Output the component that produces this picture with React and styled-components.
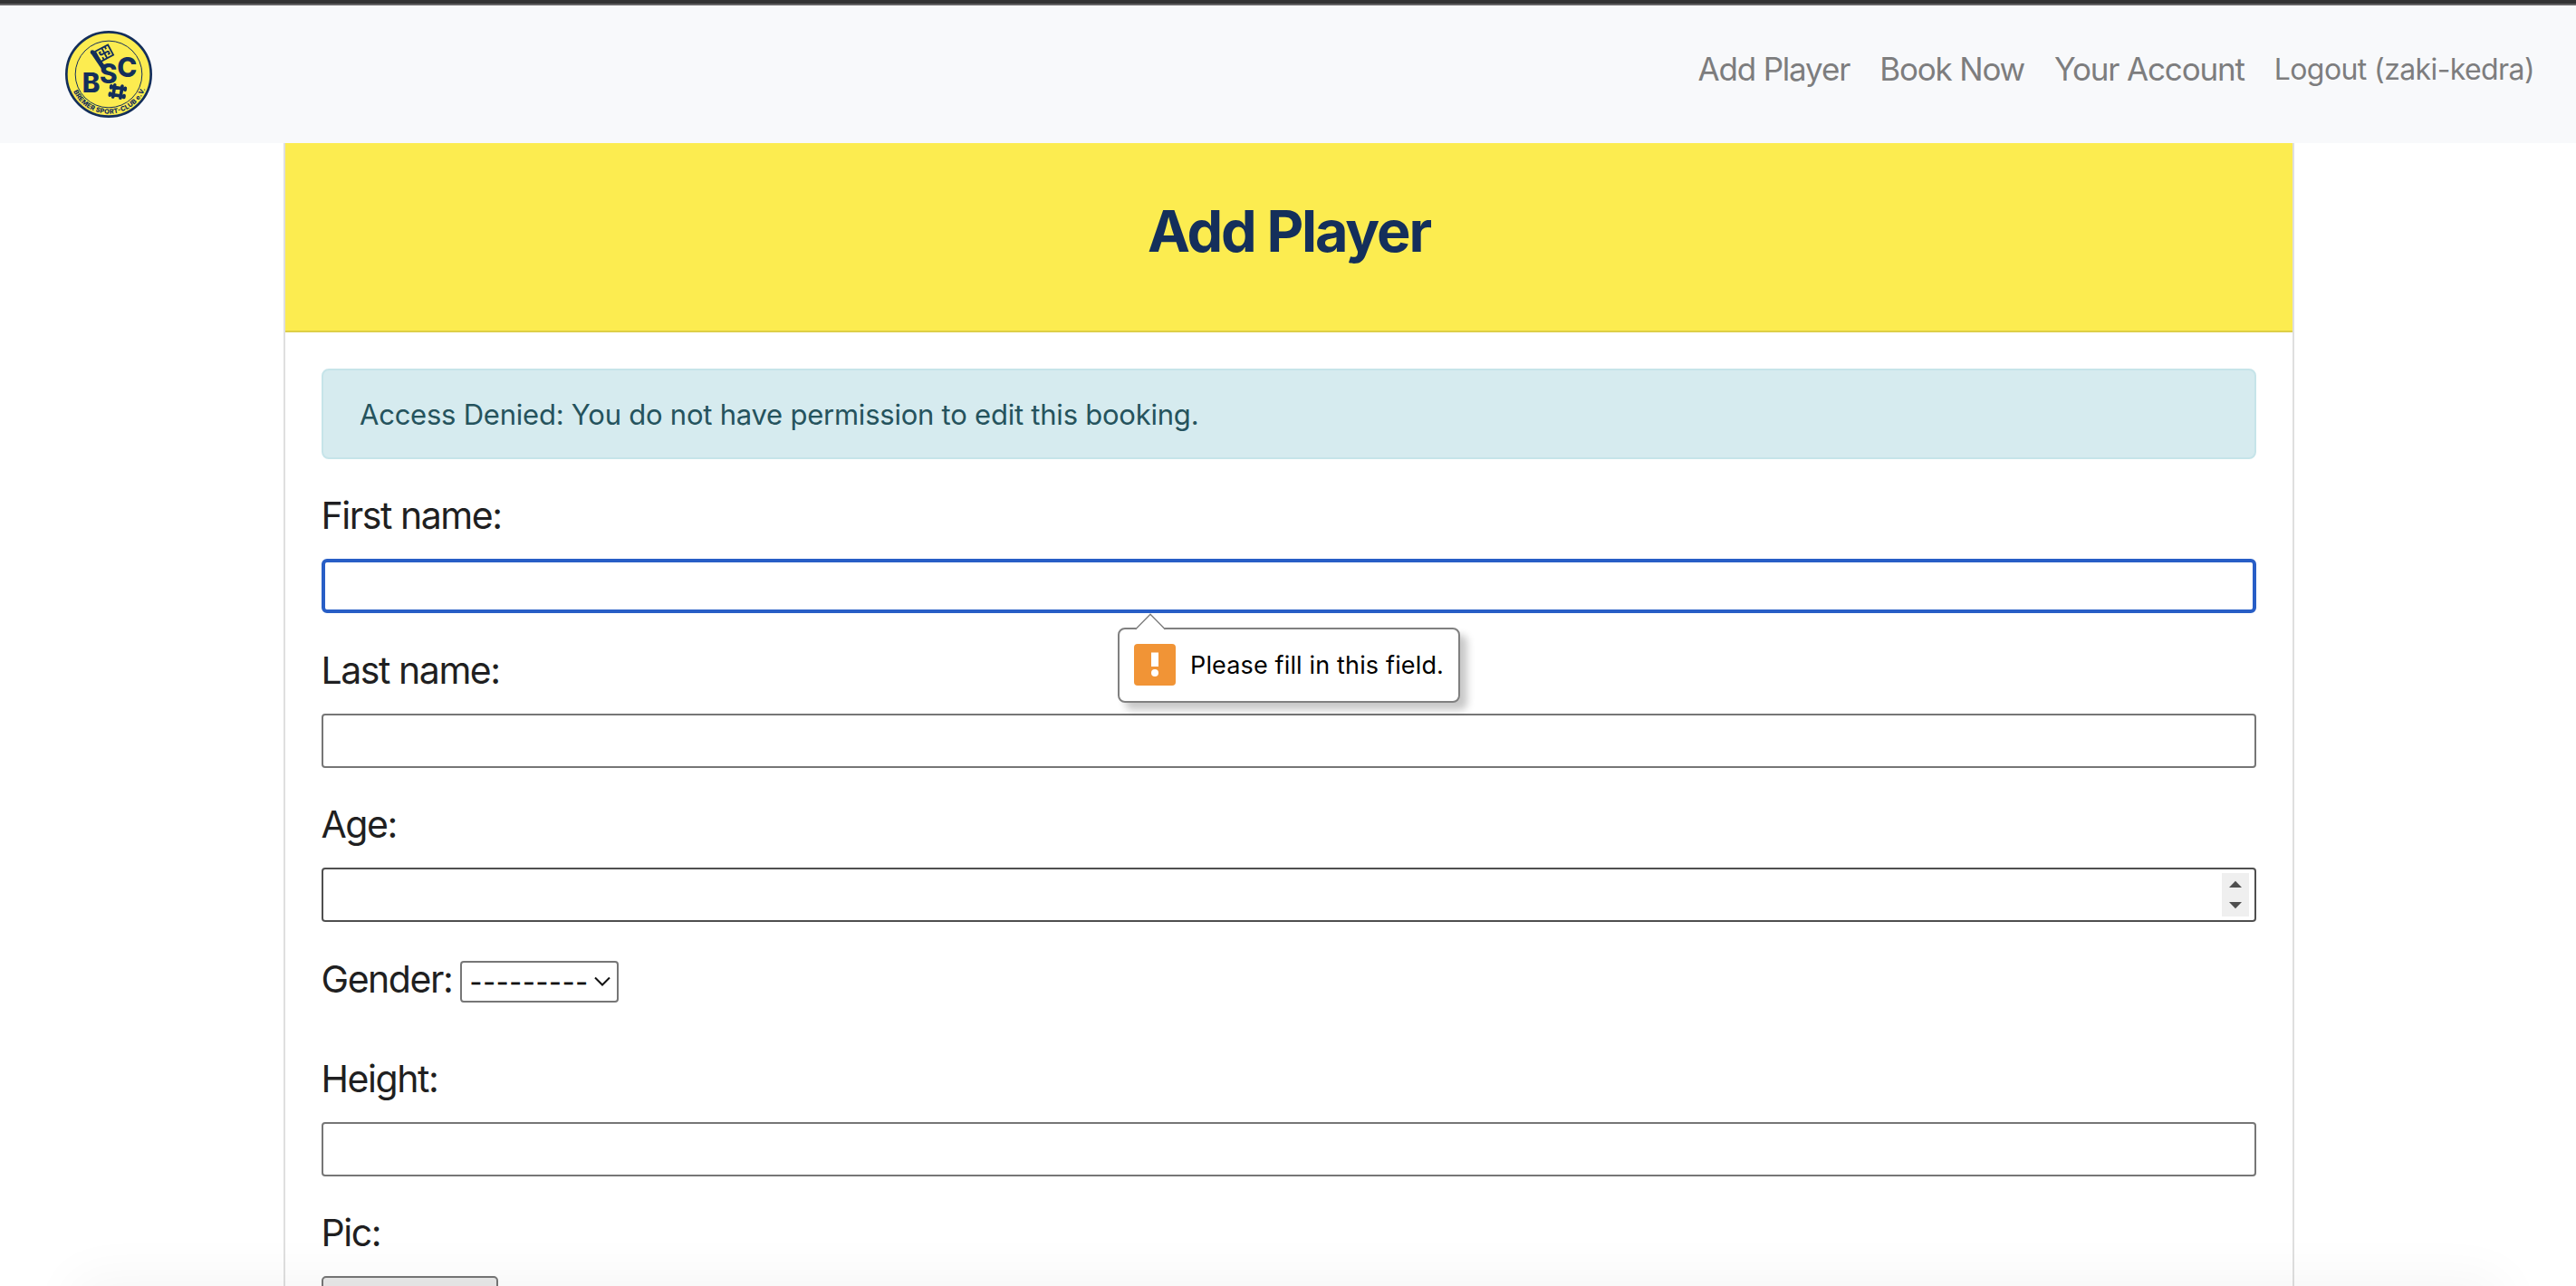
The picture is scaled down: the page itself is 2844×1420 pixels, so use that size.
import React from 'react';
import styled, { createGlobalStyle } from 'styled-components';

const GlobalStyle = createGlobalStyle`
  * { box-sizing: border-box; }
  body {
    margin: 0;
    background: #fff;
    font-family: Inter, "Liberation Sans", sans-serif;
    color: #1f1f21;
  }
  input { font: inherit; }
`;

const Page = styled.div`
  position: relative;
  height: 1420px;
  overflow: hidden;
  display: flex;
  flex-direction: column;
`;

const WindowEdge = styled.div`
  flex: none;
  height: 6px;
  background: #333334;
  border-bottom: 2px solid #646365;
`;

const Navbar = styled.nav`
  flex: none;
  height: 152px;
  padding: 0 46px 0 72px;
  display: flex;
  align-items: center;
  justify-content: space-between;
  background: #f8f9fb;
`;

const Logo = styled.svg`
  width: 96px;
  height: 96px;
  display: block;
`;

const NavLinks = styled.div`
  display: flex;
  align-items: center;
  gap: 33px;
  padding-bottom: 12px;
`;

const NavLink = styled.a`
  color: #7d7d7e;
  white-space: nowrap;
  font-size: ${(p) => (p.$small ? 32 : 35)}px;
  letter-spacing: ${(p) => (p.$small ? -0.6 : -1.17)}px;
`;

const Card = styled.main`
  flex: 1;
  width: 2220px;
  margin-left: 313px;
  border: 2px solid #dfdfdf;
  border-width: 0 2px;
`;

const CardHeader = styled.header`
  height: 209px;
  padding-top: 59px;
  background: #fcec50;
  border-bottom: 2px solid #ddcf48;
  text-align: center;
`;

const Title = styled.h1`
  margin: 0;
  font-size: 63px;
  line-height: 76px;
  font-weight: 700;
  letter-spacing: -2.15px;
  color: #142f5b;
`;

const CardBody = styled.div`
  padding: 40px;
`;

const Alert = styled.div`
  height: 100px;
  margin-bottom: 33px;
  padding: 0 40px;
  display: flex;
  align-items: center;
  border: 2px solid #c6e4e9;
  border-radius: 8px;
  background: #d6ebef;
  color: #25535d;
  font-size: 31px;
  letter-spacing: -0.23px;
`;

const Field = styled.div`
  display: flex;
  flex-direction: column;
  gap: 17px;
  margin-bottom: 33.66px;
`;

const SelectField = styled.div`
  display: flex;
  align-items: flex-start;
  height: 109.6px;
`;

const Label = styled.label`
  height: 60px;
  font-size: 41px;
  line-height: 59px;
  letter-spacing: -1.45px;
  margin-left: -0.5px;
`;

const Control = styled.div`
  position: relative;
  height: 60px;
  display: flex;
  align-items: center;
  background: #fff;
  border: ${(p) => (p.$focused ? '4px solid #285ec6' : `2px solid ${p.$hovered ? '#4f4f4f' : '#767676'}`)};
  border-radius: ${(p) => (p.$focused ? 6 : 4)}px;
  padding-right: 6px;
`;

const TextInput = styled.input`
  flex: 1;
  min-width: 0;
  border: 0;
  outline: 0;
  background: transparent;
  font-size: 27px;
`;

const Spinner = styled.svg`
  width: 30px;
  height: 48px;
  background: #efefef;
`;

const Select = styled.div`
  width: 175px;
  height: 46px;
  margin: 9px 0 0 8.5px;
  padding: 2px 7px 0 9px;
  display: flex;
  align-items: center;
  justify-content: space-between;
  border: 2px solid #767676;
  border-radius: 4px;
  color: #000;
  font-size: 29px;
  letter-spacing: 1.25px;
  -webkit-text-stroke: 0.4px #000;

  svg { margin: 0 0 3px -4px; }
`;

const FileButton = styled.button`
  width: 195px;
  height: 46px;
  border: 2px solid #767676;
  border-radius: 5px;
  background: #e9e9e9;
`;

const Bubble = styled.div`
  position: absolute;
  z-index: 2;
  top: 72px;
  left: 875px;
  width: 378px;
  height: 83px;
  padding: 0 0 1px 16px;
  display: flex;
  align-items: center;
  gap: 16px;
  background: #fff;
  border: 2px solid #808080;
  border-radius: 8px;
  box-shadow: 8px 8px 8px rgba(0, 0, 0, 0.22);
  color: #000;
  font-size: 27px;
  letter-spacing: 0.15px;
  white-space: nowrap;
`;

const BubbleArrow = styled.svg`
  position: absolute;
  top: -18px;
  left: 17px;
  width: 34px;
  height: 19px;
`;

const BottomFade = styled.div`
  position: absolute;
  left: 90px;
  right: 90px;
  top: 100%;
  height: 60px;
  box-shadow: 0 0 60px 8px rgba(0, 0, 0, 0.045);
  pointer-events: none;
`;

const navy = '#142f5b';

function ClubLogo() {
  return (
    <Logo viewBox="97 101 288 288">
      <circle cx="241" cy="245" r="140" fill="#fcec50" stroke={navy} strokeWidth="8" />
      <circle cx="241" cy="245" r="110.500" fill="none" stroke={navy} strokeWidth="3" />
      <path d="M190 174 L224 224" stroke={navy} strokeWidth="15" />
      <circle cx="187" cy="172" r="7" fill={navy} />
      <g transform="translate(227 175) rotate(-28)" fill="none" stroke={navy} strokeWidth="5.500">
        <path d="M-25 -19 H23 V19 H-25 Z" />
        <path d="M0 -19 V19 M-14 0 H14 M-14 0 V-9 H-8 M14 0 V9 H8 M11 -19 V-9 M-12 19 V9" />
      </g>
      <g fill={navy} fontFamily="Inter, sans-serif" fontWeight="800" fontSize="89">
        <text x="153" y="306">B</text>
        <text x="211" y="275">S</text>
        <text x="269" y="254">C</text>
      </g>
      <path d="M230 255 q8 12 17 4 q3 -8 -6 -8" fill="none" stroke="#fcec50" strokeWidth="2" />
      <g transform="translate(270 302) rotate(9)" stroke={navy} strokeWidth="11" strokeLinecap="round">
        <path d="M-12 -20 V20 M13 -20 V20 M-22 -12 H23 M-22 13 H23" fill="none" />
        <path d="M-23 -15 V-9 M-23 10 V16 M24 -15 V-9 M24 10 V16" />
      </g>
      <path id="motto" d="M124 302 A130 130 0 0 0 367 279" fill="none" />
      <text fill={navy} fontFamily="Inter, sans-serif" fontWeight="800" fontSize="22">
        <textPath href="#motto" textLength="302">BREMER SPORT-CLUB e.V.</textPath>
      </text>
    </Logo>
  );
}

function ValidationBubble({ children }) {
  return (
    <Bubble>
      <BubbleArrow viewBox="0 0 34 19">
        <path d="M0.500 19 V18 L17 1 L33.500 18 V19 Z" fill="#fff" />
        <path d="M0.500 18 L17 1.200 L33.500 18" fill="none" stroke="#808080" strokeWidth="1.500" />
      </BubbleArrow>
      <svg width="46" height="46" viewBox="0 0 46 46">
        <rect width="46" height="46" rx="4" fill="#f19436" />
        <rect x="19" y="9.500" width="8" height="15.500" fill="#fff" />
        <circle cx="23" cy="32" r="4" fill="#fff" />
      </svg>
      <span>{children}</span>
    </Bubble>
  );
}

function FormField({ label, focused, hovered, numeric, bubble }) {
  return (
    <Field>
      <Label>{label}</Label>
      <Control $focused={focused} $hovered={hovered}>
        <TextInput type="text" aria-label={label} />
        {numeric && (
          <Spinner viewBox="0 0 30 48">
            <path d="M8 16 L15 8.800 L22 16 Z M8 32 L15 39.200 L22 32 Z" fill="#4f4f4f" />
          </Spinner>
        )}
        {bubble && <ValidationBubble>{bubble}</ValidationBubble>}
      </Control>
    </Field>
  );
}

export default function App() {
  return (
    <>
      <GlobalStyle />
      <Page>
        <WindowEdge />
        <Navbar>
          <ClubLogo />
          <NavLinks>
            <NavLink>Add Player</NavLink>
            <NavLink>Book Now</NavLink>
            <NavLink>Your Account</NavLink>
            <NavLink $small>Logout (zaki-kedra)</NavLink>
          </NavLinks>
        </Navbar>
        <Card>
          <CardHeader>
            <Title>Add Player</Title>
          </CardHeader>
          <CardBody>
            <Alert>Access Denied: You do not have permission to edit this booking.</Alert>
            <FormField label="First name:" focused bubble="Please fill in this field." />
            <FormField label="Last name:" />
            <FormField label="Age:" hovered numeric />
            <SelectField>
              <Label>Gender:</Label>
              <Select>
                <span>---------</span>
                <svg width="18" height="11" viewBox="0 0 18 11">
                  <path d="M1 1.500 L9 9.500 L17 1.500" fill="none" stroke="#111" strokeWidth="2" />
                </svg>
              </Select>
            </SelectField>
            <FormField label="Height:" />
            <Field>
              <Label>Pic:</Label>
              <FileButton aria-label="Pic" />
            </Field>
          </CardBody>
        </Card>
        <BottomFade />
      </Page>
    </>
  );
}
